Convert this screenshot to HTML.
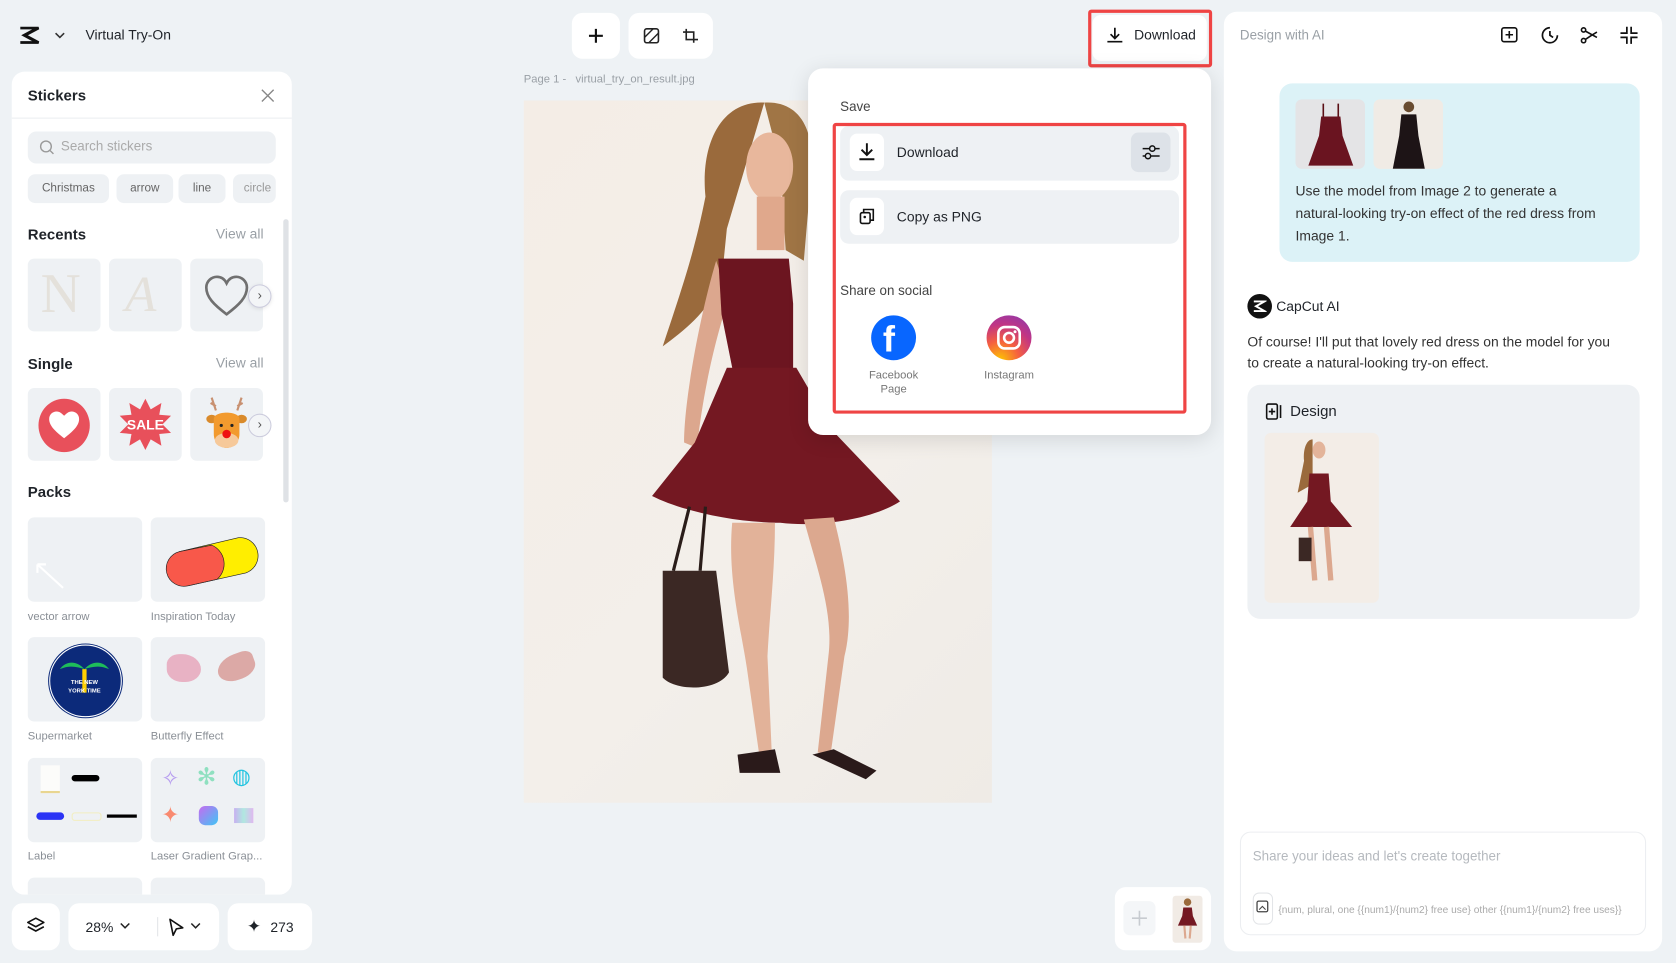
<!DOCTYPE html>
<html><head><meta charset="utf-8">
<style>
html,body{margin:0;padding:0;width:1676px;height:963px;overflow:hidden;background:#eef2f5;}
#w{position:absolute;left:0;top:0;width:1568px;height:901px;transform:scale(1.0689);transform-origin:0 0;font-family:"Liberation Sans",sans-serif;color:#1f2329;}
.a{position:absolute;}
.card{position:absolute;background:#fff;border-radius:12px;}
.t{position:absolute;white-space:nowrap;}
.tile{position:absolute;background:#eef1f4;border-radius:6px;}
.chip{position:absolute;top:163px;height:27px;background:#eef1f4;border-radius:7px;font-size:11px;color:#666;line-height:27px;text-align:center;}
.lbl{font-size:10.5px;color:#8a8f96;}
.gray{color:#9aa0a6;}
svg{position:absolute;}
</style></head><body><div id="w">

<!-- top left -->
<svg style="left:18px;top:25px" width="21" height="16" viewBox="0 0 21 16"><path d="M1 1h17l-13 7 13 7H1" fill="none" stroke="#111" stroke-width="3"/></svg>
<svg style="left:51px;top:29px" width="10" height="8" viewBox="0 0 10 8"><path d="M1 2l4 4 4-4" fill="none" stroke="#333" stroke-width="1.5"/></svg>
<div class="t" style="left:80px;top:25px;font-size:13px;">Virtual Try-On</div>

<!-- top toolbar -->
<div class="card" style="left:535px;top:12px;width:45px;height:43px;border-radius:10px"></div>
<svg style="left:549px;top:25px" width="17" height="17" viewBox="0 0 17 17"><path d="M8.5 2v13M2 8.5h13" stroke="#111" stroke-width="2"/></svg>
<div class="card" style="left:588px;top:12px;width:79px;height:43px;border-radius:10px"></div>
<svg style="left:602px;top:26px" width="15" height="15" viewBox="0 0 15 15"><rect x="1" y="1" width="13" height="13" rx="2" fill="none" stroke="#222" stroke-width="1.5"/><path d="M1 9l8-8M5 14l9-9" stroke="#222" stroke-width="1.3"/></svg>
<svg style="left:638px;top:26px" width="16" height="15" viewBox="0 0 16 15"><path d="M4 1v10h11M1 4h10v10" fill="none" stroke="#222" stroke-width="1.5"/></svg>

<div class="t" style="left:490px;top:68px;font-size:10.5px;color:#9aa0a6">Page 1 -&nbsp;&nbsp; virtual_try_on_result.jpg</div>

<!-- canvas image -->
<div class="a" style="left:490px;top:94px;width:438px;height:657px;background:linear-gradient(135deg,#f4ede6,#f3efea 60%,#efebe6);overflow:hidden">
<svg style="left:0;top:0" width="438" height="657" viewBox="0 0 438 657">
 <path d="M225 2 C185 0 165 40 170 90 C160 140 150 170 130 230 C150 215 170 200 185 170 L190 120 Z" fill="#9a6a3c"/>
 <path d="M225 2 C260 0 275 30 268 80 L262 150 L245 140 L240 60 Z" fill="#a07545"/>
 <ellipse cx="230" cy="62" rx="22" ry="32" fill="#e8b79c"/>
 <path d="M218 90 h26 v50 h-26z" fill="#e0a88c"/>
 <path d="M180 150 C165 200 150 280 150 320 L162 325 C168 270 180 220 192 185Z" fill="#dca78e"/>
 <path d="M182 148 L248 148 L252 190 L252 255 L196 255 L185 200Z" fill="#6c1520"/>
 <path d="M190 250 L255 250 L290 310 L352 375 C330 390 280 400 240 395 C200 395 150 385 120 370 L160 320Z" fill="#741822"/>
 <path d="M195 395 C190 450 205 500 210 540 L220 610 L232 610 L228 520 C230 480 235 440 235 395Z" fill="#e2b299"/>
 <path d="M262 392 C275 440 290 480 285 520 L275 610 L287 612 L300 520 C310 480 300 430 290 390Z" fill="#dca88f"/>
 <path d="M200 612 l35 -5 5 22 h-38z" fill="#2a1a1a"/>
 <path d="M270 612 l20 -5 40 20 -10 8z" fill="#2a1a1a"/>
 <path d="M130 440 h50 l12 95 c-10 18 -50 18 -62 5z" fill="#3b2824"/>
 <path d="M140 440 l15 -60 M165 440 l5 -60" stroke="#2a1d1a" stroke-width="3"/>
</svg></div>

<!-- download button -->
<div class="card" style="left:1022px;top:14px;width:107px;height:43px;border-radius:8px"></div>
<div class="a" style="left:1018px;top:9px;width:110px;height:48px;border:3px solid #ef4444;border-radius:3px"></div>
<svg style="left:1035px;top:25px" width="16" height="16" viewBox="0 0 16 16"><path d="M8 1v10M4 7l4 4 4-4M1 14h14" fill="none" stroke="#111" stroke-width="1.6"/></svg>
<div class="t" style="left:1061px;top:25px;font-size:13px">Download</div>

<!-- popover -->
<div class="card" style="left:756px;top:64px;width:377px;height:343px;border-radius:14px;box-shadow:0 4px 20px rgba(0,0,0,.12)"></div>
<div class="t" style="left:786px;top:93px;font-size:12.5px;color:#444">Save</div>
<div class="a" style="left:786px;top:118px;width:317px;height:51px;background:#eef1f4;border-radius:8px"></div>
<div class="a" style="left:795px;top:125px;width:32px;height:35px;background:#fff;border-radius:7px"></div>
<svg style="left:802px;top:133px" width="18" height="18" viewBox="0 0 18 18"><path d="M9 1v11M4 7l5 5 5-5M2 16h14" fill="none" stroke="#111" stroke-width="1.8"/></svg>
<div class="t" style="left:839px;top:135px;font-size:13px">Download</div>
<div class="a" style="left:1058px;top:124px;width:37px;height:37px;background:#dde2e8;border-radius:7px"></div>
<svg style="left:1068px;top:134px" width="17" height="17" viewBox="0 0 17 17"><path d="M1 5h16M1 12h16" stroke="#111" stroke-width="1.4"/><circle cx="10" cy="5" r="2.5" fill="#dde2e8" stroke="#111" stroke-width="1.4"/><circle cx="6" cy="12" r="2.5" fill="#dde2e8" stroke="#111" stroke-width="1.4"/></svg>
<div class="a" style="left:786px;top:178px;width:317px;height:50px;background:#eef1f4;border-radius:8px"></div>
<div class="a" style="left:795px;top:185px;width:32px;height:35px;background:#fff;border-radius:7px"></div>
<svg style="left:803px;top:194px" width="16" height="16" viewBox="0 0 16 16"><rect x="2" y="5" width="9" height="10" rx="1.5" fill="none" stroke="#111" stroke-width="1.5"/><path d="M5 5V2h9v10h-3" fill="none" stroke="#111" stroke-width="1.5"/><circle cx="6" cy="9" r="1.2" fill="#111"/></svg>
<div class="t" style="left:839px;top:195px;font-size:13px">Copy as PNG</div>
<div class="t" style="left:786px;top:265px;font-size:12.5px;color:#444">Share on social</div>
<div class="a" style="left:815px;top:295px;width:42px;height:42px;border-radius:50%;background:#0866ff"></div>
<div class="t" style="left:826px;top:296px;font-size:34px;font-weight:bold;color:#fff;line-height:44px">f</div>
<div class="a" style="left:923px;top:295px;width:42px;height:42px;border-radius:50%;background:radial-gradient(circle at 30% 100%,#fdc500 0,#f56040 35%,#c13584 65%,#833ab4 100%)"></div>
<svg style="left:932px;top:304px" width="24" height="24" viewBox="0 0 24 24"><rect x="2" y="2" width="20" height="20" rx="6" fill="none" stroke="#fff" stroke-width="2.4"/><circle cx="12" cy="12" r="4.6" fill="none" stroke="#fff" stroke-width="2.4"/><circle cx="17.6" cy="6.4" r="1.4" fill="#fff"/></svg>
<div class="t" style="left:796px;top:345px;width:80px;text-align:center;font-size:10.5px;color:#777;line-height:13px;white-space:normal">Facebook<br>Page</div>
<div class="t" style="left:904px;top:345px;width:80px;text-align:center;font-size:10.5px;color:#777">Instagram</div>
<div class="a" style="left:779px;top:115px;width:325px;height:266px;border:3px solid #ef4444;border-radius:3px"></div>

<!-- Stickers panel -->
<div class="card" style="left:11px;top:67px;width:262px;height:770px"></div>
<div class="t" style="left:26px;top:81px;font-size:14px;font-weight:bold">Stickers</div>
<svg style="left:244px;top:83px" width="13" height="13" viewBox="0 0 13 13"><path d="M1 1l11 11M12 1L1 12" stroke="#888" stroke-width="1.3"/></svg>
<div class="a" style="left:11px;top:110px;width:262px;height:1px;background:#eceef1"></div>
<div class="a" style="left:26px;top:123px;width:232px;height:30px;background:#eef1f4;border-radius:8px"></div>
<svg style="left:37px;top:131px" width="14" height="14" viewBox="0 0 14 14"><circle cx="6" cy="6" r="5" fill="none" stroke="#999" stroke-width="1.3"/><path d="M9.5 9.5l3.5 3.5" stroke="#999" stroke-width="1.3"/></svg>
<div class="t" style="left:57px;top:130px;font-size:12.5px;color:#aaa">Search stickers</div>
<div class="chip" style="left:26px;width:76px">Christmas</div>
<div class="chip" style="left:109px;width:53px">arrow</div>
<div class="chip" style="left:167px;width:44px">line</div>
<div class="chip" style="left:218px;width:40px;text-align:left;padding-left:10px;box-sizing:border-box;overflow:hidden;color:#999">circle</div>
<div class="a" style="left:265px;top:205px;width:5px;height:265px;background:#dfe2e6;border-radius:3px"></div>

<div class="t" style="left:26px;top:211px;font-size:14px;font-weight:bold">Recents</div>
<div class="t gray" style="left:202px;top:211px;font-size:13px">View all</div>
<div class="tile" style="left:26px;top:242px;width:68px;height:68px"></div>
<div class="t" style="left:38px;top:246px;font-size:52px;font-family:'Liberation Serif',serif;color:#e4e1db">N</div>
<div class="tile" style="left:102px;top:242px;width:68px;height:68px"></div>
<div class="t" style="left:117px;top:248px;font-size:48px;font-style:italic;font-family:'Liberation Serif',serif;color:#e4e1db">A</div>
<div class="tile" style="left:178px;top:242px;width:68px;height:68px"></div>
<svg style="left:190px;top:257px" width="44" height="40" viewBox="0 0 44 40"><path d="M22 37C10 28 3 21 3 12 3 6 8 2 13 2c4 0 7 2 9 6 2-4 5-6 9-6 5 0 10 4 10 10 0 9-7 16-19 25z" fill="none" stroke="#707070" stroke-width="2.5"/></svg>
<div class="a" style="left:232px;top:266px;width:20px;height:20px;border-radius:50%;background:#f3f5f7;border:1px solid #ccd;box-shadow:0 1px 4px rgba(0,0,0,.1);font-size:12px;line-height:19px;text-align:center;color:#555">›</div>

<div class="t" style="left:26px;top:332px;font-size:14px;font-weight:bold">Single</div>
<div class="t gray" style="left:202px;top:332px;font-size:13px">View all</div>
<div class="tile" style="left:26px;top:363px;width:68px;height:68px"></div>
<div class="a" style="left:36px;top:373px;width:48px;height:50px;border-radius:50%;background:#e8505b"></div>
<svg style="left:44px;top:384px" width="32" height="28" viewBox="0 0 32 28"><path d="M16 26C7 19 2 14 2 8 2 4 5 1 9 1c3 0 5 2 7 4 2-2 4-4 7-4 4 0 7 3 7 7 0 6-5 11-14 18z" fill="#fff"/></svg>
<div class="tile" style="left:102px;top:363px;width:68px;height:68px"></div>
<svg style="left:111px;top:371px" width="50" height="52" viewBox="0 0 50 52"><polygon points="25,2 30,12 40,6 38,17 49,18 41,26 49,34 38,35 40,46 30,40 25,50 20,40 10,46 12,35 1,34 9,26 1,18 12,17 10,6 20,12" fill="#e8505b"/><text x="25" y="31" text-anchor="middle" font-family="Liberation Sans" font-weight="bold" font-size="13" fill="#fff">SALE</text></svg>
<div class="tile" style="left:178px;top:363px;width:68px;height:68px"></div>
<svg style="left:192px;top:370px" width="40" height="52" viewBox="0 0 40 52"><path d="M10 14L6 2M10 10l-5-3M30 14l4-12M30 10l5-3" stroke="#c89070" stroke-width="2"/><ellipse cx="6" cy="22" rx="5" ry="4" fill="#d98a2b"/><ellipse cx="34" cy="22" rx="5" ry="4" fill="#d98a2b"/><path d="M8 22c0-8 24-8 24 0v14c0 8-6 13-12 13S8 44 8 36z" fill="#f29a2e"/><ellipse cx="20" cy="42" rx="11" ry="7" fill="#f6c99a"/><circle cx="20" cy="36" r="4" fill="#e11"/><circle cx="15" cy="28" r="1.5" fill="#222"/><circle cx="25" cy="28" r="1.5" fill="#222"/></svg>
<div class="a" style="left:232px;top:387px;width:20px;height:20px;border-radius:50%;background:#f3f5f7;border:1px solid #ccd;font-size:12px;line-height:19px;text-align:center;color:#555">›</div>

<div class="t" style="left:26px;top:452px;font-size:14px;font-weight:bold">Packs</div>
<div class="tile" style="left:26px;top:484px;width:107px;height:79px"></div>
<svg style="left:32px;top:525px" width="30" height="28" viewBox="0 0 30 28"><path d="M3 3l24 22M3 3v8M3 3h8" stroke="#fff" stroke-width="2" fill="none"/></svg>
<div class="tile" style="left:141px;top:484px;width:107px;height:79px"></div>
<svg style="left:148px;top:498px" width="94" height="55" viewBox="0 0 94 55"><path d="M20 18 L75 5 A17 17 0 0 1 82 38 L28 50Z" fill="#ffee00" stroke="#222" stroke-width=".6"/><path d="M20 18 L50 12 A19 19 0 0 1 55 44 L28 50 A16 16 0 0 1 20 18z" fill="#f8584a" stroke="#222" stroke-width=".6"/></svg>
<div class="t lbl" style="left:26px;top:571px">vector arrow</div>
<div class="t lbl" style="left:141px;top:571px">Inspiration Today</div>

<div class="tile" style="left:26px;top:596px;width:107px;height:79px"></div>
<div class="a" style="left:46px;top:603px;width:66px;height:66px;border-radius:50%;background:#0c2a7a;border:1px solid #fff;box-shadow:0 0 0 1px #0c2a7a"></div>
<svg style="left:52px;top:608px" width="54" height="50" viewBox="0 0 54 50"><path d="M27 18C18 8 8 12 4 18 14 14 20 16 27 18 34 16 40 14 50 18 46 12 36 8 27 18z" fill="#1ebd5a"/><rect x="25" y="18" width="4" height="22" fill="#ffd000"/><text x="27" y="32" text-anchor="middle" font-size="5.5" font-weight="bold" fill="#fff" font-family="Liberation Sans">THE   NEW</text><text x="27" y="40" text-anchor="middle" font-size="5.5" font-weight="bold" fill="#fff" font-family="Liberation Sans">YORK  TIME</text></svg>
<div class="tile" style="left:141px;top:596px;width:107px;height:79px"></div>
<div class="a" style="left:156px;top:612px;width:32px;height:26px;border-radius:40% 60% 50% 50%;background:#e8b2c4"></div>
<div class="a" style="left:203px;top:612px;width:36px;height:24px;border-radius:60% 30% 50% 50%;background:#dca9a6;transform:rotate(-20deg)"></div>
<div class="t lbl" style="left:26px;top:683px">Supermarket</div>
<div class="t lbl" style="left:141px;top:683px">Butterfly Effect</div>

<div class="tile" style="left:26px;top:709px;width:107px;height:79px"></div>
<div class="a" style="left:38px;top:716px;width:18px;height:24px;background:#fcfcfa;border-bottom:2px solid #e9d690"></div>
<div class="a" style="left:67px;top:725px;width:26px;height:6px;border-radius:3px;background:#000"></div>
<div class="a" style="left:34px;top:760px;width:26px;height:7px;border-radius:4px;background:#2b34f5"></div>
<div class="a" style="left:67px;top:760px;width:26px;height:6px;border-radius:3px;border:1px solid #f2eec0"></div>
<div class="a" style="left:100px;top:762px;width:28px;height:3px;background:#000"></div>
<div class="tile" style="left:141px;top:709px;width:107px;height:79px"></div>
<div class="t" style="left:151px;top:716px;font-size:20px;color:#b69cf0">✧</div>
<div class="t" style="left:184px;top:714px;font-size:22px;color:#8fe0c0">✻</div>
<div class="t" style="left:217px;top:714px;font-size:20px;color:#22c4e0">◍</div>
<div class="t" style="left:151px;top:750px;font-size:20px;color:#f98a70">✦</div>
<div class="a" style="left:186px;top:754px;width:18px;height:18px;border-radius:6px;background:linear-gradient(135deg,#c66cf0,#3fc5f5)"></div>
<div class="a" style="left:219px;top:756px;width:18px;height:14px;background:linear-gradient(90deg,#c8b0f0,#b0e8e0,#e0b8f0)"></div>
<div class="t lbl" style="left:26px;top:795px">Label</div>
<div class="t lbl" style="left:141px;top:795px">Laser Gradient Grap...</div>
<div class="tile" style="left:26px;top:821px;width:107px;height:16px;border-radius:6px 6px 0 0"></div>
<div class="tile" style="left:141px;top:821px;width:107px;height:16px;border-radius:6px 6px 0 0"></div>

<!-- bottom left bar -->
<div class="card" style="left:11px;top:845px;width:45px;height:44px;border-radius:10px"></div>
<svg style="left:25px;top:858px" width="17" height="17" viewBox="0 0 17 17"><path d="M8.5 1L16 5l-7.5 4L1 5z M1 9l7.5 4 7.5-4" fill="none" stroke="#111" stroke-width="1.5" stroke-linejoin="round"/></svg>
<div class="card" style="left:64px;top:845px;width:141px;height:44px;border-radius:10px"></div>
<div class="t" style="left:80px;top:860px;font-size:13px">28%</div>
<svg style="left:112px;top:863px" width="10" height="7" viewBox="0 0 10 7"><path d="M1 1l4 4 4-4" fill="none" stroke="#222" stroke-width="1.4"/></svg>
<div class="a" style="left:147px;top:858px;width:1px;height:18px;background:#e3e5e8"></div>
<svg style="left:157px;top:859px" width="15" height="17" viewBox="0 0 15 17"><path d="M2 1l12 8-6 1-3 6z" fill="none" stroke="#111" stroke-width="1.5" stroke-linejoin="round"/></svg>
<svg style="left:178px;top:863px" width="10" height="7" viewBox="0 0 10 7"><path d="M1 1l4 4 4-4" fill="none" stroke="#222" stroke-width="1.4"/></svg>
<div class="card" style="left:213px;top:845px;width:79px;height:44px;border-radius:10px"></div>
<div class="t" style="left:231px;top:857px;font-size:16px">✦</div>
<div class="t" style="left:253px;top:860px;font-size:13px">273</div>

<!-- bottom thumbs -->
<div class="card" style="left:1043px;top:830px;width:90px;height:59px;border-radius:10px"></div>
<div class="a" style="left:1051px;top:843px;width:30px;height:32px;border-radius:6px;background:#f4f6f8"></div>
<svg style="left:1058px;top:851px" width="16" height="16" viewBox="0 0 16 16"><path d="M8 1v14M1 8h14" stroke="#c7cbd0" stroke-width="1.5"/></svg>
<div class="a" style="left:1097px;top:838px;width:28px;height:44px;background:#f1ebe5;border-radius:3px"></div>
<svg style="left:1097px;top:838px" width="28" height="44" viewBox="0 0 28 44"><circle cx="14" cy="6" r="3.5" fill="#9a6a3c"/><path d="M10 11h8l1 8 4 9H5l4-9z" fill="#741822"/><path d="M11 28l1 12M17 28l-1 12" stroke="#dca88f" stroke-width="2"/></svg>

<!-- right panel -->
<div class="card" style="left:1145px;top:11px;width:410px;height:879px"></div>
<div class="t gray" style="left:1160px;top:26px;font-size:12.5px">Design with AI</div>
<svg style="left:1403px;top:24px" width="18" height="18" viewBox="0 0 18 18"><rect x="2" y="2" width="14" height="13" rx="2" fill="none" stroke="#111" stroke-width="1.5"/><path d="M9 5v7M5.5 8.5h7" stroke="#111" stroke-width="1.5"/></svg>
<svg style="left:1441px;top:24px" width="18" height="18" viewBox="0 0 18 18"><path d="M16 9A7 7 0 1 1 9 2" fill="none" stroke="#111" stroke-width="1.6"/><path d="M9 5v4l3 2" fill="none" stroke="#111" stroke-width="1.6"/></svg>
<svg style="left:1478px;top:24px" width="18" height="18" viewBox="0 0 18 18"><circle cx="3.5" cy="4" r="2" fill="none" stroke="#111" stroke-width="1.5"/><circle cx="3.5" cy="14" r="2" fill="none" stroke="#111" stroke-width="1.5"/><path d="M5 5l11 6M5 13l6-4M11 9l5-3" stroke="#111" stroke-width="1.5"/></svg>
<svg style="left:1515px;top:24px" width="18" height="18" viewBox="0 0 18 18"><path d="M7 1v6H1M11 1v6h6M7 17v-6H1M11 17v-6h6" fill="none" stroke="#111" stroke-width="1.6"/></svg>

<div class="a" style="left:1197px;top:78px;width:337px;height:167px;background:#dcf2f7;border-radius:12px"></div>
<div class="a" style="left:1212px;top:93px;width:65px;height:65px;background:#e4e4e6;border-radius:6px;overflow:hidden"><svg style="left:0;top:0" width="65" height="65" viewBox="0 0 65 65"><path d="M26 4v14M40 4v14" stroke="#5a0e14" stroke-width="1.5"/><path d="M24 16h18l2 18 10 28H12l10-28z" fill="#6a1420"/></svg></div>
<div class="a" style="left:1285px;top:93px;width:65px;height:65px;background:#f0ebe5;border-radius:6px;overflow:hidden"><svg style="left:0;top:0" width="65" height="65" viewBox="0 0 65 65"><circle cx="33" cy="7" r="5" fill="#6a4c30"/><path d="M26 14h14l2 20 6 31H18l6-31z" fill="#1d1416"/></svg></div>
<div class="t" style="left:1212px;top:168px;font-size:13px;line-height:21px;color:#333">Use the model from Image 2 to generate a<br>natural-looking try-on effect of the red dress from<br>Image 1.</div>

<div class="a" style="left:1167px;top:275px;width:23px;height:23px;border-radius:50%;background:#111"></div>
<svg style="left:1172px;top:281px" width="13" height="11" viewBox="0 0 13 11"><path d="M1 1h10l-8 4.5 8 4.5H1" fill="none" stroke="#fff" stroke-width="1.8"/></svg>
<div class="t" style="left:1194px;top:279px;font-size:13px">CapCut AI</div>
<div class="t" style="left:1167px;top:310px;font-size:13px;line-height:20px;color:#333">Of course! I'll put that lovely red dress on the model for you<br>to create a natural-looking try-on effect.</div>

<div class="a" style="left:1167px;top:360px;width:367px;height:219px;background:#eef1f4;border-radius:12px"></div>
<svg style="left:1184px;top:377px" width="16" height="16" viewBox="0 0 16 16"><rect x="1" y="1" width="10" height="14" rx="1.5" fill="none" stroke="#111" stroke-width="1.5"/><path d="M6 5v6M3 8h6M14 2v12" stroke="#111" stroke-width="1.5"/></svg>
<div class="t" style="left:1207px;top:376px;font-size:14px">Design</div>
<div class="a" style="left:1183px;top:405px;width:107px;height:159px;background:#f3ede7;border-radius:6px;overflow:hidden"><svg style="left:0;top:0" width="107" height="159" viewBox="0 0 107 159"><path d="M45 6c-6 0-9 10-8 20l-6 30 14-8z" fill="#9a6a3c"/><ellipse cx="51" cy="16" rx="6" ry="8" fill="#e3b49a"/><path d="M42 38h18l2 26 20 24H24l16-24z" fill="#741822"/><path d="M43 88l4 50M58 88l4 50" stroke="#dca88f" stroke-width="5"/><rect x="32" y="98" width="12" height="22" fill="#3b2824"/></svg></div>

<div class="a" style="left:1160px;top:778px;width:380px;height:97px;background:#fff;border:1px solid #eceef1;border-radius:10px;box-sizing:border-box"></div>
<div class="t" style="left:1172px;top:794px;font-size:12.5px;color:#b5b9be">Share your ideas and let's create together</div>
<div class="a" style="left:1172px;top:835px;width:17px;height:28px;border:1px solid #e3e5e8;border-radius:6px"></div>
<svg style="left:1175px;top:842px" width="12" height="12" viewBox="0 0 12 12"><rect x="1" y="1" width="10" height="10" rx="1.5" fill="none" stroke="#444" stroke-width="1.2"/><path d="M3 9l3-3 3 3" fill="none" stroke="#444" stroke-width="1"/></svg>
<div class="t" style="left:1196px;top:846px;font-size:9.5px;color:#aaa;width:357px;overflow:hidden">{num, plural, one {{num1}/{num2} free use} other {{num1}/{num2} free uses}}</div>

</div></body></html>
